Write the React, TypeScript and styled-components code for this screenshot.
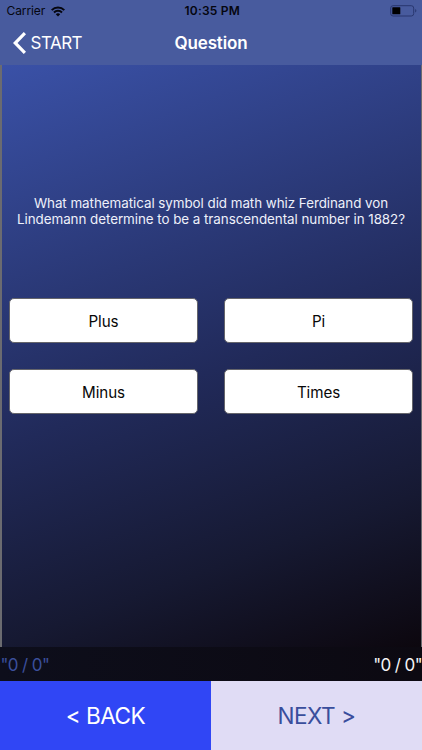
import React from "react";
import styled, { createGlobalStyle } from "styled-components";

const GlobalStyle = createGlobalStyle`
  * { box-sizing: border-box; }
  body { margin: 0; background: #0c0b14; }
  button { border: 0; padding: 0; margin: 0; background: none; color: inherit; font: inherit; }
`;

const Screen = styled.div`
  width: 422px;
  height: 750px;
  display: flex;
  flex-direction: column;
  overflow: hidden;
  font-family: Inter, "Liberation Sans", sans-serif;
  color: #fff;
`;

const Header = styled.header`
  height: 65px;
  flex: none;
  background: #485b9e;
`;

const StatusBar = styled.div`
  height: 21px;
  display: grid;
  grid-template-columns: 1fr auto 1fr;
  align-items: center;
  padding: 1px 5px 0 6.5px;
  color: #05060f;
  font-size: 12px;
  line-height: 20px;
`;

const Carrier = styled.div`
  display: flex;
  align-items: center;
  gap: 6px;
  letter-spacing: -0.1px;
`;

const Clock = styled.div`
  padding-left: 1px;
  font-weight: 600;
  letter-spacing: 0.2px;
`;

const BatteryIcon = styled.svg`
  justify-self: end;
  display: block;
`;

const NavBar = styled.nav`
  height: 44px;
  display: grid;
  grid-template-columns: 1fr auto 1fr;
  align-items: center;
  padding: 0 13px;
  font-size: 17px;
`;

const BackLink = styled.button`
  display: flex;
  align-items: center;
  gap: 4.5px;
  letter-spacing: -0.5px;
`;

const Title = styled.h1`
  margin: 0;
  font-size: 17px;
  font-weight: 600;
  letter-spacing: -0.15px;
`;

const Quiz = styled.main`
  height: 582px;
  flex: none;
  border: solid #6b6b70;
  border-width: 0 1px 0 2px;
  padding: 130px 8px 0 7px;
  background: linear-gradient(160deg, #3a51a7 0%, #212a5a 52%, #161932 79%, #0c070e 100%);
`;

const Prompt = styled.p`
  margin: 0;
  height: 103px;
  text-align: center;
  font-size: 13.4px;
  letter-spacing: -0.05px;
  line-height: 16px;
  white-space: pre;
  color: #eef0fa;
`;

const Answers = styled.div`
  display: grid;
  grid-template-columns: 189px 189px;
  grid-auto-rows: 45px;
  justify-content: space-between;
  row-gap: 26px;
`;

const Answer = styled.button`
  border: 1px solid #65656b;
  border-radius: 5px;
  padding-top: 1px;
  background: #fff;
  color: #080808;
  font-size: 15.2px;
  letter-spacing: -0.1px;
`;

const ScoreBar = styled.div`
  height: 34px;
  flex: none;
  display: flex;
  justify-content: space-between;
  align-items: center;
  padding: 1px 0 0 0.5px;
  background: linear-gradient(90deg, #0d0e1b, #0c0911);
  font-size: 17px;
`;

const Score = styled.span<{ $color: string }>`
  color: ${(p) => p.$color};
  letter-spacing: -0.6px;
`;

const Pager = styled.footer`
  height: 69px;
  display: grid;
  grid-template-columns: 1fr 1fr;
`;

const PageButton = styled.button<{ $bg: string; $fg: string }>`
  padding-bottom: 1px;
  background: ${(p) => p.$bg};
  color: ${(p) => p.$fg};
  font-size: 22.6px;
  letter-spacing: -0.5px;
`;

const answers = ["Plus", "Pi", "Minus", "Times"];

export default function App() {
  return (
    <Screen>
      <GlobalStyle />
      <Header>
        <StatusBar>
          <Carrier>
            Carrier
            <svg width="14" height="11" viewBox="0 0 14 11" fill="none" stroke="currentColor" strokeWidth="2">
              <path d="M0.7 4.1C4.1 0.6 9.9 0.6 13.3 4.1" />
              <path d="M3 6.5C5.2 4.3 8.8 4.3 11 6.5" />
              <path d="M4.8 8.2C6 7 8 7 9.2 8.2L7 10.4Z" fill="currentColor" stroke="none" />
            </svg>
          </Carrier>
          <Clock>10:35 PM</Clock>
          <BatteryIcon width="27" height="12" viewBox="0 0 27 12">
            <rect x="0.7" y="0.7" width="23" height="10.3" rx="2.4" fill="none" stroke="#29376f" />
            <rect x="2.3" y="2.3" width="8" height="7" rx="0.5" fill="#000" />
            <path d="M25.2 4C26.8 4.6 26.8 7 25.2 7.6Z" fill="#29376f" />
          </BatteryIcon>
        </StatusBar>
        <NavBar>
          <BackLink>
            <svg width="13" height="22" viewBox="0 0 13 22" fill="none" stroke="#fff" strokeWidth="3.2">
              <path d="M11.9 1.2L2.2 11L11.9 20.8" />
            </svg>
            START
          </BackLink>
          <Title>Question</Title>
        </NavBar>
      </Header>
      <Quiz>
        <Prompt>
          {"What mathematical symbol did math whiz Ferdinand von\nLindemann determine to be a transcendental number in 1882?"}
        </Prompt>
        <Answers>
          {answers.map((label) => (
            <Answer key={label}>{label}</Answer>
          ))}
        </Answers>
      </Quiz>
      <ScoreBar>
        <Score $color="#3b4f9b">"0 / 0"</Score>
        <Score $color="#f4f4f6">"0 / 0"</Score>
      </ScoreBar>
      <Pager>
        <PageButton $bg="#3046f5" $fg="#fff">&lt; BACK</PageButton>
        <PageButton $bg="#e0dcf5" $fg="#394e9c">NEXT &gt;</PageButton>
      </Pager>
    </Screen>
  );
}
